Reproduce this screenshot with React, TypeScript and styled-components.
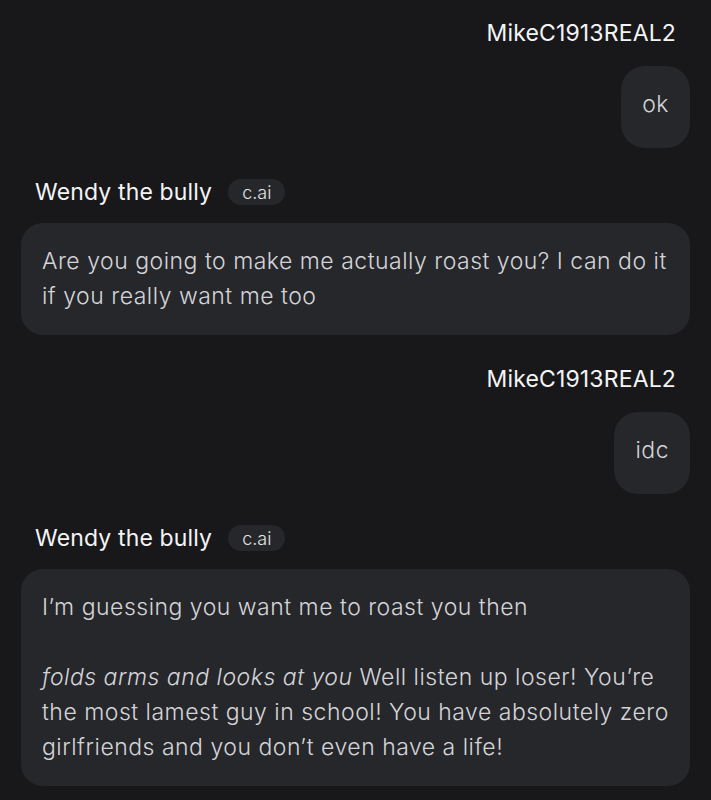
import React from "react";
import styled, { createGlobalStyle } from "styled-components";

const Global = createGlobalStyle`
  html, body { margin: 0; padding: 0; background: #18181b; }
  body { font-family: Inter, "Noto Sans", sans-serif; -webkit-font-smoothing: antialiased; }
`;

const Page = styled.div`
  width: 711px;
  min-height: 800px;
  box-sizing: border-box;
  background: #18181b;
  padding: 18px 21px 0;
  display: flex;
  flex-direction: column;
`;

const Group = styled.div<{ $user?: boolean; $first?: boolean }>`
  display: flex;
  flex-direction: column;
  align-items: ${(p) => (p.$user ? "flex-end" : "stretch")};
  margin-top: ${(p) => (p.$first ? "0" : "29px")};
`;

const Header = styled.div<{ $user?: boolean }>`
  display: flex;
  align-items: center;
  gap: 16px;
  height: 30px;
  padding: ${(p) => (p.$user ? "0 14px 0 0" : "0 0 0 14px")};
  margin-bottom: ${(p) => (p.$user ? "18px" : "16px")};
`;

const Name = styled.span`
  font-family: Inter, "Noto Sans", sans-serif;
  font-size: 23px;
  font-weight: 400;
  color: #f4f4f5;
  letter-spacing: 0.15px;
`;

const Badge = styled.span`
  display: inline-flex;
  align-items: center;
  justify-content: center;
  height: 26px;
  padding: 0 14px;
  border-radius: 13px;
  background: #26272b;
  color: #e4e4e7;
  font-size: 18px;
  font-weight: 300;
`;

const Bubble = styled.div<{ $short?: boolean }>`
  background: #26272b;
  color: #d4d4d8;
  font-size: 23px;
  font-weight: 300;
  letter-spacing: 0.5px;
  line-height: 35px;
  border-radius: ${(p) => (p.$short ? "24px" : "22px")};
  ${(p) =>
    p.$short
      ? `height: 82px; padding: 0 21px 5px; display: flex; align-items: center; box-sizing: border-box;`
      : `padding: 21px 21px 21px 21px;`}
`;

const Para = styled.p`
  margin: 0;
  & + & { margin-top: 35px; }
`;

const Action = styled.em`
  font-style: italic;
`;

export default function App() {
  return (
    <>
      <Global />
      <Page>
        <Group $user $first>
          <Header $user>
            <Name>MikeC1913REAL2</Name>
          </Header>
          <Bubble $short>ok</Bubble>
        </Group>
        <Group>
          <Header>
            <Name>Wendy the bully</Name>
            <Badge>c.ai</Badge>
          </Header>
          <Bubble>
            Are you going to make me actually roast you? I can do it if you really want me too
          </Bubble>
        </Group>
        <Group $user>
          <Header $user>
            <Name>MikeC1913REAL2</Name>
          </Header>
          <Bubble $short>idc</Bubble>
        </Group>
        <Group>
          <Header>
            <Name>Wendy the bully</Name>
            <Badge>c.ai</Badge>
          </Header>
          <Bubble>
            <Para>I’m guessing you want me to roast you then</Para>
            <Para>
              <Action>folds arms and looks at you</Action> Well listen up loser! You’re the most lamest guy in school! You have absolutely zero girlfriends and you don’t even have a life!
            </Para>
          </Bubble>
        </Group>
      </Page>
    </>
  );
}
